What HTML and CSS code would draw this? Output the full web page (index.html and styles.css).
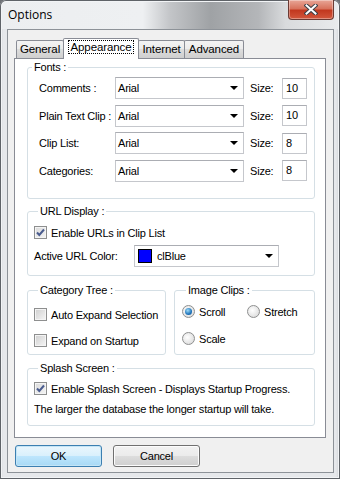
FILE: index.html
```html
<!DOCTYPE html>
<html lang="en">
  <head>
    <meta charset="UTF-8" />
    <meta name="viewport" content="width=device-width, initial-scale=1.0" />
    <title>Options</title>
    <link rel="stylesheet" href="styles.css">
  </head>
  <body>
    <div class="window">
      <div class="titlebar">
        <span class="title">Options</span>
        <div class="close">
          <svg width="14" height="11" viewBox="0 0 14 11">
            <path d="M2.5 1.5 L11.5 9.5 M11.5 1.5 L2.5 9.5" stroke="#3b3f46" stroke-width="4" stroke-linecap="square" />
            <path d="M2.5 1.5 L11.5 9.5 M11.5 1.5 L2.5 9.5" stroke="#fff" stroke-width="2" stroke-linecap="square" />
          </svg>
        </div>
      </div>

      <div class="client">
        <div class="tabs">
          <div class="tab tab-general">General</div>
          <div class="tab tab-appearance active"><span class="focus">Appearance</span></div>
          <div class="tab tab-internet">Internet</div>
          <div class="tab tab-advanced">Advanced</div>
        </div>

        <div class="page">
          <fieldset class="group fonts">
            <legend>Fonts :</legend>
            <div class="font-grid">
              <span>Comments :</span>
              <div class="combo"><span>Arial</span><i class="arrow"></i></div>
              <span class="size-label">Size:</span>
              <div class="edit">10</div>

              <span>Plain Text Clip :</span>
              <div class="combo"><span>Arial</span><i class="arrow"></i></div>
              <span class="size-label">Size:</span>
              <div class="edit">10</div>

              <span>Clip List:</span>
              <div class="combo"><span>Arial</span><i class="arrow"></i></div>
              <span class="size-label">Size:</span>
              <div class="edit">8</div>

              <span>Categories:</span>
              <div class="combo"><span>Arial</span><i class="arrow"></i></div>
              <span class="size-label">Size:</span>
              <div class="edit">8</div>
            </div>
          </fieldset>

          <fieldset class="group url">
            <legend>URL Display :</legend>
            <label class="option">
              <span class="check checked"><svg width="11" height="11" viewBox="0 0 11 11"><path d="M2 5.5 L4.3 8 L9 2.5" fill="none" stroke="#4a5c8e" stroke-width="2" /></svg></span>
              Enable URLs in Clip List
            </label>
            <div class="color-row">
              <span class="color-label">Active URL Color:</span>
              <div class="combo color-combo">
                <span class="swatch"></span><span>clBlue</span><i class="arrow"></i>
              </div>
            </div>
          </fieldset>

          <div class="pair">
            <fieldset class="group category">
              <legend>Category Tree :</legend>
              <label class="option"><span class="check"></span>Auto Expand Selection</label>
              <label class="option"><span class="check"></span>Expand on Startup</label>
            </fieldset>
            <fieldset class="group images">
              <legend>Image Clips :</legend>
              <div class="radio-grid">
                <label class="option"><span class="radio selected"></span>Scroll</label>
                <label class="option"><span class="radio"></span>Stretch</label>
                <label class="option"><span class="radio"></span>Scale</label>
              </div>
            </fieldset>
          </div>

          <fieldset class="group splash">
            <legend>Splash Screen :</legend>
            <label class="option">
              <span class="check checked"><svg width="11" height="11" viewBox="0 0 11 11"><path d="M2 5.5 L4.3 8 L9 2.5" fill="none" stroke="#4a5c8e" stroke-width="2" /></svg></span>
              Enable Splash Screen - Displays Startup Progress.
            </label>
            <p class="note">The larger the database the longer startup will take.</p>
          </fieldset>
        </div>

        <div class="buttons">
          <button class="btn default">OK</button>
          <button class="btn">Cancel</button>
        </div>
      </div>
    </div>
  </body>
</html>
```

FILE: styles.css
```css
:root {
  font-family: "Liberation Sans", Arial, sans-serif;
  font-size: 11px;
  letter-spacing: -0.2px;
  color: #000;
}

body {
  margin: 0;
  width: 340px;
  height: 479px;
  overflow: hidden;
  background-color: #6d7075;
}

.window {
  box-sizing: border-box;
  height: 479px;
  padding: 0 6px 0 7px;
  border-radius: 6px 6px 0 0;
  background:
    linear-gradient(to right, #eceef0 0, #eef0f2 42%, #c3c5c8 50%, #9fa2a5 62%, #b4b6b9 76%, #d9dbdd 84%, #e9ebed 100%) top / 100% 29px no-repeat,
    linear-gradient(to right, #c9ccd0 0, #e6e8eb 3px, #e6e8eb 336px, #c9ccd0 100%);
  box-shadow: inset 0 0 0 1px #5f6368, inset 0 0 0 2px #f2f4f6;
}

.titlebar {
  height: 29px;
  display: flex;
  justify-content: space-between;
  align-items: flex-start;
}

.title {
  font-family: "Open Sans", "Noto Sans", sans-serif;
  font-size: 12px;
  letter-spacing: 0;
  line-height: 14px;
  margin: 8px 0 0 1px;
}

.close {
  box-sizing: border-box;
  width: 46px;
  height: 20px;
  border: 1px solid #6b3a33;
  border-top: none;
  border-radius: 0 0 4px 4px;
  background: linear-gradient(#e8a697, #d8735d 45%, #c2381f 55%, #d2573c);
  box-shadow: inset 0 0 0 1px rgba(255, 255, 255, 0.35);
  display: flex;
  align-items: center;
  justify-content: center;
}

.client {
  box-sizing: border-box;
  height: 444px;
  border: 1px solid #8d9298;
  background-color: #f0f0f0;
  padding: 8px 7px 0 6px;
}

/* tabs */
.tabs {
  display: flex;
  align-items: flex-end;
  height: 20px;
  padding-left: 2px;
}

.tab {
  box-sizing: border-box;
  height: 18px;
  border: 1px solid #898c95;
  border-bottom: none;
  border-radius: 2px 2px 0 0;
  background: linear-gradient(#f3f3f3, #ebebeb 50%, #dddddd 50%, #cfcfcf);
  text-align: center;
  line-height: 17px;
  font-size: 11.5px;
  letter-spacing: -0.1px;
}

.tab + .tab {
  margin-left: -1px;
}

.tab-general { width: 48px; }
.tab-appearance { width: 76px; }
.tab-internet { width: 47px; }
.tab-advanced { width: 60px; }

.tab.active {
  height: 21px;
  margin-bottom: -1px;
  background: #fff;
  position: relative;
  z-index: 1;
  line-height: 16px;
}

.focus {
  outline: 1px dotted #000;
  padding: 0 1px;
}

.page {
  box-sizing: border-box;
  height: 380px;
  border: 1px solid #898c95;
  background-color: #fff;
  padding: 2px 10px 0 12px;
}

/* group boxes */
.group {
  box-sizing: border-box;
  margin: 0;
  padding: 0;
  min-width: 0;
  border: 1px solid #d5dfe5;
  border-radius: 3px;
}

.group legend {
  margin-left: 4px;
  padding: 0 2px;
  line-height: 13px;
}

.fonts { height: 138px; }

.font-grid {
  display: grid;
  grid-template-columns: 76px 129px 38px 25px;
  grid-auto-rows: 22px;
  row-gap: 5.5px;
  align-items: center;
  padding: 3px 0 0 11px;
}

.size-label {
  padding-left: 6px;
}

.combo {
  box-sizing: border-box;
  height: 22px;
  border: 1px solid #c5c7cc;
  border-top-color: #abadb3;
  display: flex;
  align-items: center;
  padding: 0 5px 0 2px;
}

.combo span {
  flex: 1;
}

.arrow {
  width: 0;
  height: 0;
  border-left: 4px solid transparent;
  border-right: 4px solid transparent;
  border-top: 4px solid #000;
}

.edit {
  box-sizing: border-box;
  height: 21px;
  border: 1px solid #c5c7cc;
  border-top-color: #abadb3;
  padding-left: 3px;
  line-height: 18px;
}

.url {
  height: 71px;
  margin-top: 6px;
  padding: 8px 0 0 6px;
}

.option {
  display: flex;
  align-items: center;
  gap: 4px;
  height: 13px;
  white-space: nowrap;
}

.check {
  box-sizing: border-box;
  width: 13px;
  height: 13px;
  border: 1px solid #8e8f8f;
  background: linear-gradient(135deg, #cfcfcf, #f6f6f6);
  box-shadow: inset 0 0 0 1px #f4f4f4;
  display: flex;
  align-items: center;
  justify-content: center;
}

.check.checked {
  background: linear-gradient(135deg, #dadada, #f4f4f4);
}

.color-row {
  display: flex;
  align-items: center;
  margin-top: 6px;
}

.color-label {
  width: 100px;
}

.color-combo {
  width: 145px;
  padding-left: 3px;
  gap: 5px;
}

.swatch {
  box-sizing: border-box;
  flex: none !important;
  width: 14px;
  height: 14px;
  border: 1px solid #000;
  background-color: #0000ff;
}

.pair {
  display: flex;
  gap: 8px;
  margin-top: 8px;
}

.category {
  width: 139px;
  height: 71px;
  padding: 11px 0 0 6px;
}

.category .option + .option {
  margin-top: 13px;
}

.images {
  flex: 1;
  height: 71px;
  padding: 8px 0 0 7px;
}

.radio-grid {
  display: grid;
  grid-template-columns: 65px auto;
  row-gap: 14px;
}

.radio {
  box-sizing: border-box;
  width: 13px;
  height: 13px;
  border: 1px solid #8e8f8f;
  border-radius: 50%;
  background: radial-gradient(circle at 40% 40%, #fff, #d4d4d4);
  display: flex;
  align-items: center;
  justify-content: center;
}

.radio.selected::after {
  content: "";
  width: 7px;
  height: 7px;
  border-radius: 50%;
  background: radial-gradient(circle at 40% 35%, #9fdcf8, #1f74bb 60%, #0e4c88);
}

.splash {
  height: 64px;
  margin-top: 7px;
  padding: 7px 0 0 6px;
}

.note {
  margin: 8px 0 0;
  line-height: 13px;
}

/* buttons */
.buttons {
  display: flex;
  gap: 11px;
  padding: 7px 0 0 1px;
}

.btn {
  box-sizing: border-box;
  width: 87px;
  height: 22px;
  border: 1px solid #707070;
  border-radius: 3px;
  background: linear-gradient(#f2f2f2, #ebebeb 50%, #dddddd 50%, #cfcfcf);
  box-shadow: inset 0 0 0 1px #fcfcfc;
  font-family: "Liberation Sans", Arial, sans-serif;
  font-size: 11px;
  letter-spacing: -0.2px;
  color: #000;
  padding: 0;
}

.btn.default {
  border-color: #3c7fb1;
  background: linear-gradient(#eaf6fd, #d9f0fc 50%, #bee6fd 50%, #a7d9f5);
  box-shadow: inset 0 0 0 1px #c4e5f6;
}
```
